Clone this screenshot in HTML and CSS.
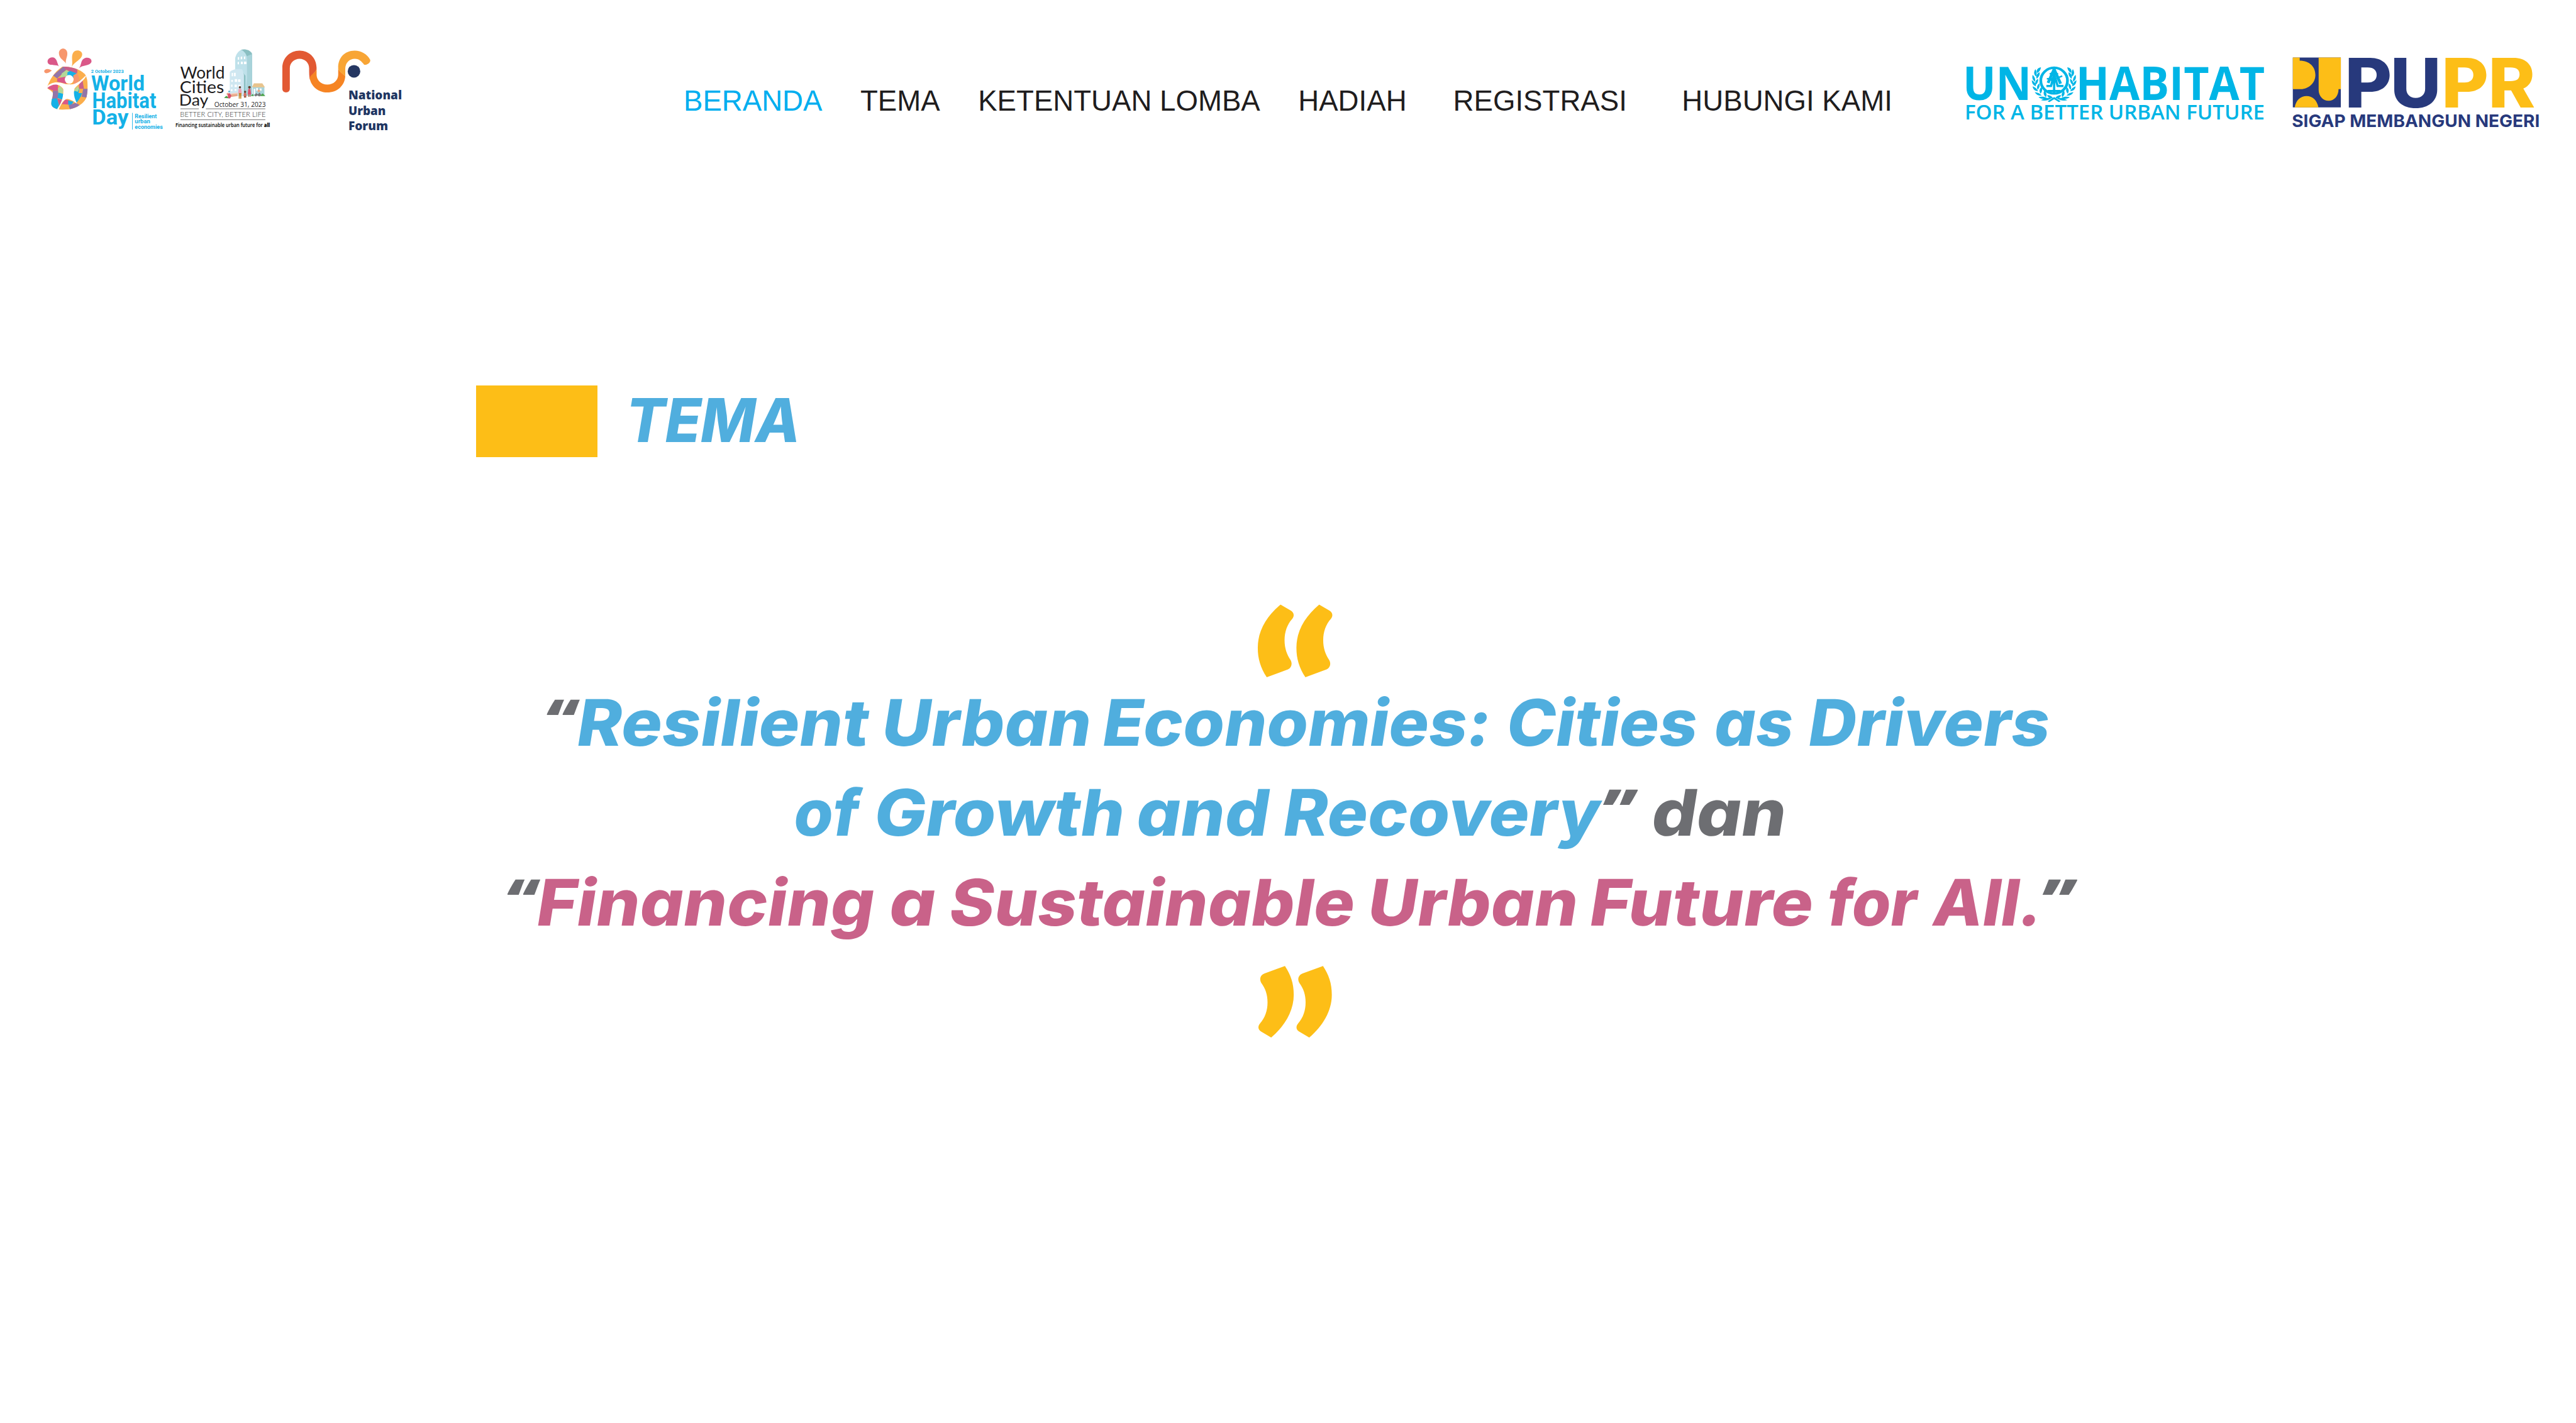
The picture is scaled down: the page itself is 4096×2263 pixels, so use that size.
FILE: index.html
```
<!DOCTYPE html>
<html lang="id">
<head>
<meta charset="utf-8">
<title>Tema</title>
<link rel="stylesheet" href="styles.css">
</head>
<body>
<header class="header">
  <svg class="logo logo-whd" viewBox="0 0 690 510" role="img" aria-label="World Habitat Day">
    <g>
      <path fill="#f7966c" d="M50 162C52 148 76 146 90 159C80 168 54 182 50 162Z"/>
      <path fill="#da5888" d="M127 137C118 126 82 136 71 122C61 105 76 86 97 90C118 95 117 120 127 137Z"/>
      <path fill="#f7966c" d="M164 122C156 106 127 98 127 66C130 36 168 36 171 66C173 88 160 100 164 122Z"/>
      <path fill="#fbae4c" d="M194 139C202 116 190 90 200 68C210 46 250 50 249 76C246 102 210 112 194 139Z"/>
      <path fill="#da5888" d="M232 146C246 130 240 106 258 96C280 84 302 98 297 114C288 136 250 128 232 146Z"/>
    </g>
    <clipPath id="heart"><path d="M146 137C190 138 236 150 262 177C282 200 280 260 272 296C258 334 210 362 165 362C130 366 96 360 88 338C84 318 96 300 96 276C90 262 66 258 65 246C78 210 100 168 146 137Z"/></clipPath>
    <g clip-path="url(#heart)">
      <path fill="#fbae4c" d="M60 130H290V370H60Z"/>
      <path fill="#9375a8" d="M96 184L150 137L166 154L140 180L118 200Z"/>
      <path fill="#c9608a" d="M146 130L226 144L222 174L190 166L162 154Z"/>
      <path fill="#b4d898" d="M144 172L168 155L182 164L170 190L132 197Z"/>
      <path fill="#14b1e7" d="M172 168L186 160L222 174L206 200H170Z"/>
      <path fill="#da5888" d="M118 200L134 196L166 190V228L118 216Z"/>
      <path fill="#f7966c" d="M202 184L222 172L234 196L228 222L204 234Z"/>
      <path fill="#fbae4c" d="M222 150L282 170V190L234 204Z"/>
      <path fill="#da5888" d="M66 250L92 226L122 232V264H98Z"/>
      <path fill="#c9608a" d="M234 210L250 204L258 254H232Z"/>
      <path fill="#9375a8" d="M96 264H124L122 304L92 310Z"/>
      <path fill="#b4d898" d="M122 252L134 238L150 260L146 284L124 274Z"/>
      <path fill="#14b1e7" d="M124 274L150 280V312L120 302ZM80 306L118 304L128 340L116 366H80Z"/>
      <path fill="#c9608a" d="M118 304L144 312L130 344Z"/>
      <path fill="#14b1e7" d="M204 268L234 252L228 284L202 322Z"/>
      <path fill="#b4d898" d="M204 262L226 240L232 254L226 270Z"/>
      <path fill="#9375a8" d="M254 254H282L272 300L246 296Z"/>
      <path fill="#14b1e7" d="M202 276H248L240 300L220 326L200 316Z"/>
      <path fill="#fbae4c" d="M240 296L272 300L250 334L222 330Z"/>
      <path fill="#da5888" d="M142 334L160 310L180 314L176 336Z"/>
      <path fill="#14b1e7" d="M176 314L204 322L192 338H176Z"/>
      <path fill="#9375a8" d="M178 340L216 326L242 344L186 366Z"/>
      <path fill="#fff" d="M58 248C84 218 116 214 156 228C166 232 176 228 188 231C218 232 244 208 272 180C264 208 226 232 209 252C202 276 206 300 222 332C206 322 192 310 170 307C150 310 136 340 124 368L116 362C134 338 152 308 150 256C130 226 96 224 66 250Z"/>
      <circle cx="181" cy="205" r="23" fill="#fff"/>
    </g>
    <g class="whd-text">
      <text x="295" y="170" font-size="25" textLength="171" lengthAdjust="spacingAndGlyphs">2 October 2023</text>
      <text x="296" y="263" font-size="111" textLength="280" lengthAdjust="spacingAndGlyphs">World</text>
      <text x="301" y="354" font-size="113" textLength="335" lengthAdjust="spacingAndGlyphs">Habitat</text>
      <text x="300" y="441" font-size="111" textLength="191" lengthAdjust="spacingAndGlyphs">Day</text>
      <text x="524" y="407" font-size="28" textLength="115" lengthAdjust="spacingAndGlyphs">Resilient</text>
      <text x="524" y="435" font-size="28" textLength="80" lengthAdjust="spacingAndGlyphs">urban</text>
      <text x="524" y="462" font-size="28" textLength="146" lengthAdjust="spacingAndGlyphs">economies</text>
    </g>
    <path d="M511.500 380V467" stroke="#14b1e7" stroke-width="3"/>
  </svg>

  <svg class="logo logo-wcd" viewBox="0 0 570 510" role="img" aria-label="World Cities Day">
    <path fill="#8abfc2" d="M388 50C410 44 440 52 447 72V290H400V70Z"/>
    <path fill="#a8d3da" d="M418 84L447 72V290H410Z"/>
    <path fill="#bfe1ea" d="M358 270V94C362 72 378 54 390 50C404 56 420 74 420 94V200L412 292H358Z"/>
    <path fill="#8abfc2" d="M392 160L412 186V292H396Z"/>
    <path fill="#cfe7f1" d="M330 280V168C336 152 380 146 396 154L404 180V292H330Z"/>
    <g fill="#fff">
      <path d="M372 89l7-2v14l-7 1zM387 87l8-2v14l-8 1zM404 86l7-2v14l-7 1zM371 114l7-1v13h-7zM388 112l10 1v12h-10zM404 112h13v13h-13z"/>
      <path d="M340 172l7-2v18h-7zM352 170h9v18h-9zM338 207h8v11h-8zM356 203h12v15h-12zM373 205h13v13h-13zM337 232h7v12h-7zM355 232h12v13h-12zM374 233h12v12h-12zM336 256h8v10h-8zM355 256h10v8h-10z"/>
    </g>
    <path fill="#a8d3da" d="M450 244H511V290H450Z"/>
    <path fill="#e8c48d" d="M446 246L456 225H500L514 246Z"/>
    <path fill="#fff" d="M455 254h8v28h-8zM468 250h9v14h-9zM487 252h9v12h-9z"/>
    <path fill="#4fa54b" d="M300 302L312 290L330 304ZM440 292L450 280L456 292ZM486 292L502 278L516 292Z"/>
    <path fill="#e9a98a" d="M312 280l8-6 10 10 40-8v16l-44 6z"/>
    <path fill="#f6cfc0" d="M336 278l34-4v6l-34 4z"/>
    <path fill="#d9506e" d="M320 280l10-4 8 14-6 14-12-2z"/>
    <path fill="#777" d="M458 288l10-12 8 8 10-10 8 12-10 8-10-6-8 6z"/>
    <circle cx="482" cy="265" r="7" fill="#e9a98a"/>
    <circle cx="327" cy="268" r="5" fill="#5fb4d2"/>
    <circle cx="383" cy="246" r="6" fill="#66402e"/>
    <path fill="#ef9fb0" d="M376 254h14l3 24h-19z"/>
    <path fill="#c8882b" d="M377 276h14l-1 30h-5l-1-24-2 24h-5z"/>
    <circle cx="433" cy="246" r="7" fill="#66402e"/>
    <path fill="#e0526c" d="M427 254h11l4 30h-18z"/>
    <path fill="#a65a40" d="M427 284h4v12h-4zM434 284h4v12h-4z"/>
    <circle cx="410" cy="270" r="6" fill="#66402e"/>
    <path fill="#d96a5d" d="M404 276h11l3 15h-16z"/>
    <path fill="#a65a40" d="M404 291h12v9h-12z"/>
    <g class="wcd-name">
      <text x="71" y="200" font-size="86" textLength="233" lengthAdjust="spacingAndGlyphs">World</text>
      <text x="68" y="275" font-size="86" textLength="232" lengthAdjust="spacingAndGlyphs">Cities</text>
      <text x="65" y="343" font-size="80" textLength="153" lengthAdjust="spacingAndGlyphs">Day</text>
    </g>
    <text class="wcd-date" x="249" y="347" font-size="35" textLength="269" lengthAdjust="spacingAndGlyphs">October 31, 2023</text>
    <path d="M72 358.500H168M205 358.500H516M72 415.500H516" stroke="#666" stroke-width="3"/>
    <text class="wcd-motto" x="70" y="402" font-size="39" textLength="448" lengthAdjust="spacingAndGlyphs">BETTER CITY, BETTER LIFE</text>
    <text class="wcd-tag" x="46" y="454" font-size="28" textLength="494" lengthAdjust="spacingAndGlyphs">Financing sustainable urban future for <tspan class="heavy">all</tspan></text>
  </svg>

  <svg class="logo logo-nuf" viewBox="0 0 720 510" role="img" aria-label="National Urban Forum">
    <path fill="#e25933" d="M36 254V144C36 92 76 54 126 54C176 54 215 92 215 144C215 170 190 172 180 206C176 190 176 170 176 146C176 118 154 97 126 97C98 97 75 118 75 146V254C75 279 36 279 36 254Z"/>
    <path fill="#f68423" d="M215 146V182C216 210 240 232 271 232C304 232 327 210 328 182V146C334 168 350 170 365 188C362 238 322 273 271 273C222 273 184 240 179 196C186 176 212 170 215 146Z"/>
    <path fill="#f8a535" d="M328 146C326 94 360 54 414 54C448 54 480 72 495 102C500 116 478 132 464 128C450 112 440 97 415 97C386 97 365 118 365 150V189C350 170 330 166 328 146Z"/>
    <circle cx="410.500" cy="162.500" r="33" fill="#253762"/>
    <g class="nuf-text">
      <text x="381" y="309" font-size="65" textLength="280" lengthAdjust="spacingAndGlyphs">National</text>
      <text x="381" y="390" font-size="65" textLength="196" lengthAdjust="spacingAndGlyphs">Urban</text>
      <text x="381" y="470" font-size="65" textLength="208" lengthAdjust="spacingAndGlyphs">Forum</text>
    </g>
  </svg>

  <nav class="nav">
    <a class="nav-link is-active">BERANDA</a>
    <a class="nav-link">TEMA</a>
    <a class="nav-link">KETENTUAN LOMBA</a>
    <a class="nav-link">HADIAH</a>
    <a class="nav-link nav-link-wide">REGISTRASI</a>
    <a class="nav-link nav-link-wider">HUBUNGI KAMI</a>
  </nav>

  <svg class="logo logo-unh" viewBox="0 0 1568 420" preserveAspectRatio="none" role="img" aria-label="UN-Habitat">
    <g class="unh-name">
      <text x="57" y="254" font-size="244" textLength="330" lengthAdjust="spacingAndGlyphs">UN</text>
      <text x="599" y="254" font-size="244" textLength="906" lengthAdjust="spacingAndGlyphs">HABITAT</text>
    </g>
    <text class="unh-tag" x="66" y="356" font-size="107" textLength="1438" lengthAdjust="spacingAndGlyphs">FOR A BETTER URBAN FUTURE</text>
    <g fill="none" stroke="#00b5e6">
      <ellipse cx="495" cy="152" rx="64" ry="67" stroke-width="13"/>
      <path stroke-width="11" d="M495 86V222M464 206H526M458 180H480L495 120L512 180H540"/>
      <path stroke-width="14" d="M495 92L466 164M495 92L526 168"/>
      <path stroke-width="8" d="M460 142H486M506 140L534 128M474 118L492 108L514 118M478 152L494 132L508 156"/>
    </g>
    <g id="laurel" fill="#00b5e6">
      <path d="M432 82C414 86 408 98 414 112C424 106 430 96 432 82ZM405 92C396 108 398 120 408 130C414 116 412 104 405 92ZM425 108C412 116 406 128 412 142C422 132 428 122 425 108ZM392 122C388 138 392 150 404 158C406 144 402 132 392 122ZM418 142C406 150 402 162 406 174C416 166 420 154 418 142ZM388 150C388 166 394 176 408 182C408 168 400 158 388 150ZM424 166C414 176 410 186 416 200C424 190 428 180 424 166ZM392 182C394 198 402 206 418 208C414 196 406 188 392 182ZM434 186C424 196 422 208 430 220C438 210 440 198 434 186ZM402 212C410 226 420 232 436 230C428 220 418 214 402 212ZM448 204C442 216 444 228 456 238C462 226 458 214 448 204ZM420 238C432 248 446 250 460 242C448 236 436 234 420 238ZM462 228C464 240 474 246 490 244C484 234 474 228 462 228ZM432 254C450 260 470 254 482 244C462 240 446 244 432 254ZM464 260L494 238L524 260L518 264L494 248L472 264Z"/>
    </g>
    <use href="#laurel" transform="matrix(-1 0 0 1 990 0)"/>
  </svg>

  <svg class="logo logo-pupr" viewBox="0 0 1440 510" role="img" aria-label="PUPR">
    <path fill="#27397c" d="M78 61H329V321H78Z"/>
    <path fill="#fdbe17" d="M78 61H114V77C166 77 196 110 196 152C196 194 160 226 120 226H78ZM213 61H329V226H317C317 262 294 287 265 287C236 287 213 262 213 230ZM88 321C94 284 118 262 150 262C182 262 204 284 212 321Z"/>
    <g class="pupr-name">
      <text x="349" y="321" font-size="358" textLength="247" lengthAdjust="spacingAndGlyphs">P</text>
      <text x="588" y="321" font-size="358" textLength="266" lengthAdjust="spacingAndGlyphs">U</text>
      <g class="gold">
        <text x="855" y="321" font-size="358" textLength="247" lengthAdjust="spacingAndGlyphs">P</text>
        <text x="1099" y="321" font-size="358" textLength="247" lengthAdjust="spacingAndGlyphs">R</text>
      </g>
    </g>
    <text class="pupr-tag" x="73" y="424" font-size="91" textLength="1296" lengthAdjust="spacingAndGlyphs">SIGAP MEMBANGUN NEGERI</text>
  </svg>
</header>

<main>
  <section class="heading">
    <span class="heading-block"></span>
    <svg class="heading-title" viewBox="0 0 320 125"><text transform="translate(0 99) skewX(-9.5)" x="2" y="0" font-size="105.500" textLength="304" lengthAdjust="spacingAndGlyphs">TEMA</text></svg>
  </section>

  <section class="theme">
    <svg class="mark" viewBox="0 0 480 480" aria-hidden="true">
      <path id="mark-open" d="M155 41L210 73C226 83 228 102 216 116C190 144 176 184 176 228C176 268 188 304 208 332C218 350 212 370 194 380L83 421C50 370 36 324 36 266C36 180 80 104 155 41Z"/>
      <use href="#mark-open" x="202"/>
    </svg>
    <svg class="line" viewBox="0 0 4489 157">
      <text class="q" x="947" y="98" font-size="108" textLength="55" lengthAdjust="spacingAndGlyphs">“</text>
      <g class="blue" transform="translate(0 100) skewX(-9)">
        <text x="1001" y="0" textLength="508" lengthAdjust="spacingAndGlyphs">Resilient</text>
        <text x="1532" y="0" textLength="365" lengthAdjust="spacingAndGlyphs">Urban</text>
        <text x="1917" y="0" textLength="676" lengthAdjust="spacingAndGlyphs">Economies:</text>
        <text x="2621" y="0" textLength="332" lengthAdjust="spacingAndGlyphs">Cities</text>
        <text x="2983" y="0" textLength="137" lengthAdjust="spacingAndGlyphs">as</text>
        <text x="3147" y="0" textLength="420" lengthAdjust="spacingAndGlyphs">Drivers</text>
      </g>
    </svg>
    <svg class="line" viewBox="0 0 4489 157">
      <g class="blue" transform="translate(0 100) skewX(-9)">
        <text x="1379" y="0" textLength="113" lengthAdjust="spacingAndGlyphs">of</text>
        <text x="1519" y="0" textLength="436" lengthAdjust="spacingAndGlyphs">Growth</text>
        <text x="1976" y="0" textLength="231" lengthAdjust="spacingAndGlyphs">and</text>
        <text x="2232" y="0" textLength="552" lengthAdjust="spacingAndGlyphs">Recovery</text>
      </g>
      <text class="q" x="2788" y="98" font-size="108" textLength="58" lengthAdjust="spacingAndGlyphs">”</text>
      <g class="grey" transform="translate(0 100) skewX(-9)">
        <text x="2874" y="0" textLength="234" lengthAdjust="spacingAndGlyphs">dan</text>
      </g>
    </svg>
    <svg class="line" viewBox="0 0 4489 157">
      <text class="q" x="878" y="98" font-size="108" textLength="55" lengthAdjust="spacingAndGlyphs">“</text>
      <g class="pink" transform="translate(0 100) skewX(-9)">
        <text x="931" y="0" textLength="588" lengthAdjust="spacingAndGlyphs">Financing</text>
        <text x="1545" y="0" textLength="81" lengthAdjust="spacingAndGlyphs">a</text>
        <text x="1650" y="0" textLength="706" lengthAdjust="spacingAndGlyphs">Sustainable</text>
        <text x="2379" y="0" textLength="366" lengthAdjust="spacingAndGlyphs">Urban</text>
        <text x="2766" y="0" textLength="389" lengthAdjust="spacingAndGlyphs">Future</text>
        <text x="3180" y="0" textLength="156" lengthAdjust="spacingAndGlyphs">for</text>
        <text x="3364" y="0" textLength="190" lengthAdjust="spacingAndGlyphs">All.</text>
      </g>
      <text class="q" x="3554" y="98" font-size="108" textLength="58" lengthAdjust="spacingAndGlyphs">”</text>
    </svg>
    <svg class="mark" viewBox="0 3 480 480" aria-hidden="true">
      <path id="mark-close" d="M178 40C208 86 224 130 224 190C224 276 176 354 106 414L52 382C36 372 36 354 48 340C74 310 87 274 87 230C87 190 76 158 54 128C42 106 52 86 72 79Z"/>
      <use href="#mark-close" x="199"/>
    </svg>
  </section>
</main>
</body>
</html>
```
FILE: styles.css
```
body {
  margin: 0;
  background: #fff;
  font-family: "Liberation Sans", Arial, sans-serif;
}

svg {
  display: block;
  flex: none;
  overflow: visible;
}

/* Header */
.header {
  display: flex;
  align-items: flex-start;
  height: 219px;
  padding: 63.900px 0 0 54.750px;
  box-sizing: border-box;
}

.logo { height: 155.120px; }
.logo-whd { width: 209.860px; }
.logo-wcd { width: 173.370px; }
.logo-nuf { width: 218.990px; }
.logo-unh { width: 520.100px; height: 127.740px; margin-left: auto; margin-top: 18.250px; }
.logo-pupr { width: 437.980px; margin-right: 35.580px; margin-top: 9.120px; }

.whd-text { font-family: Roboto, sans-serif; font-weight: 700; fill: #14b1e7; }
.wcd-name { font-family: Lato, sans-serif; fill: #1d1b1c; }
.wcd-date { font-family: "Open Sans", sans-serif; fill: #1d1b1c; }
.wcd-motto { font-family: Lato, sans-serif; font-weight: 300; fill: #333; }
.wcd-tag { font-family: "Open Sans", sans-serif; font-weight: 600; fill: #000; }
.heavy { font-weight: 800; }
.nuf-text { font-family: "Open Sans", sans-serif; font-weight: 800; fill: #1f3663; }
.unh-name { font-family: "Open Sans", sans-serif; font-weight: 700; fill: #00b5e6; }
.unh-tag { font-family: "Open Sans", sans-serif; font-weight: 600; fill: #00b5e6; }
.pupr-name { font-family: Inter, sans-serif; font-weight: 800; fill: #27397c; }
.gold { fill: #fdbe17; }
.pupr-tag { font-family: Inter, sans-serif; font-weight: 700; fill: #27397c; }

.nav {
  display: flex;
  gap: 60.500px;
  margin: 74.300px 0 0 430.040px;
  font-size: 45.620px;
  line-height: 46px;
  font-kerning: none;
  white-space: nowrap;
  color: #1f1d1e;
}
.nav-link-wide { margin-left: 13.500px; }
.nav-link-wider { margin-left: 27px; }
.is-active { color: #00aeef; }

/* Section heading */
.heading {
  display: flex;
  align-items: flex-start;
  gap: 39px;
  padding: 394.200px 0 0 757.200px;
}
.heading-block { width: 192.500px; height: 114px; background: #fdbe17; }
.heading-title {
  width: 291.980px;
  height: 114.060px;
  font-family: Inter, sans-serif;
  font-weight: 800;
  fill: #50aede;
}

/* Theme statement */
.theme {
  display: flex;
  flex-direction: column;
  padding-top: 221.700px;
}
.mark {
  width: 146px;
  height: 146px;
  margin-left: 1989.150px;
  fill: #fdbe17;
}
.line {
  width: 4096px;
  height: 143.250px;
  font-family: Inter, sans-serif;
  font-size: 112px;
  font-weight: 800;
  font-feature-settings: "cv11", "ss03";
}
.blue { fill: #50aede; }
.pink { fill: #c96289; }
.grey { fill: #6d6e72; }
.q { font-family: "Open Sans", sans-serif; font-style: italic; fill: #6d6e72; }
```
